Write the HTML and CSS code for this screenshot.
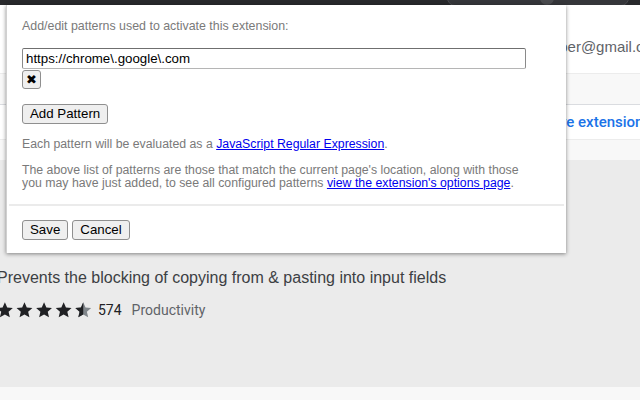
FILE: index.html
```html
<!DOCTYPE html>
<html>
<head>
<meta charset="utf-8">
<link rel="stylesheet" href="styles.css">
</head>
<body>
<div class="topbar"><div class="omni"><span class="omni-dot"></span></div></div>
<div class="page">
  <div class="header"><span class="email">developer@gmail.com</span></div>
  <div class="band"></div>
  <div class="linkrow"><span class="bluelink">Remove extension</span></div>
  <div class="band short"></div>
  <div class="main">
    <h1 class="title">Don't F*** With Paste</h1>
    <p class="desc">Prevents the blocking of copying from &amp; pasting into input fields</p>
    <div class="rating">
      <span class="stars">
        <svg width="96" height="18" viewBox="0 0 96 18">
          <defs>
            <path id="st" d="M9 1.2l2.35 5.3 5.75.5-4.35 3.8 1.3 5.65L9 13.5l-5.05 2.95 1.3-5.65L.9 7l5.75-.5z"/>
            <clipPath id="half"><rect x="0" y="0" width="9" height="18"/></clipPath>
          </defs>
          <use href="#st" x="-4" fill="#202124"/>
          <use href="#st" x="16" fill="#202124"/>
          <use href="#st" x="36" fill="#202124"/>
          <use href="#st" x="56" fill="#202124"/>
          <g transform="translate(76 0)">
            <use href="#st" fill="#80868b"/>
            <use href="#st" fill="#202124" clip-path="url(#half)"/>
          </g>
        </svg>
      </span>
      <span class="count">574</span>
      <span class="cat">Productivity</span>
    </div>
  </div>
  <div class="foot"></div>
</div>

<div class="modal">
  <div class="section">
    <p class="intro">Add/edit patterns used to activate this extension:</p>
    <input class="pattern" type="text" value="https://chrome\.google\.com">
    <div><button class="btn xbtn">&#x2716;</button></div>
    <button class="btn add">Add Pattern</button>
    <p class="note">Each pattern will be evaluated as a <a href="#">JavaScript Regular Expression</a>.</p>
    <p class="note second">The above list of patterns are those that match the current page's location, along with those you may have just added, to see all configured patterns <a href="#">view the extension's options page</a>.</p>
  </div>
  <hr class="rule">
  <div class="section actions">
    <button class="btn">Save</button>
    <button class="btn">Cancel</button>
  </div>
</div>
</body>
</html>
```
FILE: styles.css
```css
html, body {
  margin: 0;
  padding: 0;
}
body {
  width: 640px;
  height: 400px;
  overflow: hidden;
  position: relative;
  font-family: "Liberation Sans", Arial, sans-serif;
  background: #f8f8f8;
}
.topbar {
  height: 5px;
  background: #28292c;
  position: relative;
  overflow: hidden;
}
.omni {
  position: absolute;
  left: 447px;
  top: -12px;
  width: 180px;
  height: 16px;
  border: 1px solid #4a4b4f;
  border-radius: 8px;
  background: #35363a;
}
.omni-dot {
  position: absolute;
  left: 92px;
  top: 2px;
  width: 14px;
  height: 14px;
  border-radius: 50%;
  background: #4a4b4f;
}
.page {
  display: flex;
  flex-direction: column;
}
.header {
  height: 68px;
  background: #fff;
  box-sizing: border-box;
  padding: 33px 0 0 515px;
  overflow: hidden;
  white-space: nowrap;
}
.email {
  font-size: 15px;
  line-height: 18px;
  color: #5f6368;
}
.band {
  height: 30px;
  background: #f8f8f8;
  border-top: 1px solid #ececec;
  border-bottom: 1px solid #dadce0;
}
.band.short {
  height: 20px;
  border-bottom: none;
}
.linkrow {
  height: 34px;
  background: #fff;
  box-sizing: border-box;
  padding: 8px 0 0 520px;
  overflow: hidden;
  white-space: nowrap;
}
.bluelink {
  color: #1a73e8;
  font-size: 15px;
  line-height: 18px;
  font-family: Roboto, "Liberation Sans", sans-serif;
  font-weight: 500;
}
.main {
  height: 227px;
  background: #ebebeb;
  overflow: hidden;
}
.title {
  margin: 60px 0 0 -250px;
  font-size: 24px;
  font-weight: normal;
  color: #202124;
  height: 26px;
  line-height: 26px;
  white-space: nowrap;
}
.desc {
  margin: 22px 0 0 -3px;
  font-size: 16px;
  line-height: 20px;
  color: #3c4043;
  white-space: nowrap;
}
.rating {
  margin-top: 13px;
  display: flex;
  align-items: center;
  height: 18px;
  font-family: Roboto, "Liberation Sans", sans-serif;
  font-size: 14px;
}
.stars {
  display: flex;
  width: 94px;
}
.count {
  margin-left: 4px;
  color: #202124;
}
.cat {
  margin-left: 10px;
  color: #5f6368;
}
.foot {
  height: 13px;
  background: #f8f8f8;
}

.modal {
  position: absolute;
  left: 6px;
  top: 5px;
  width: 560px;
  height: 248px;
  background: #fff;
  box-shadow: 0 1px 4px rgba(0, 0, 0, 0.45);
  border-left: 1px solid #d0d0d0;
  box-sizing: border-box;
  padding: 0 2px;
}
.section {
  padding: 0 13px;
}
.intro {
  margin: 14px 0 0;
  font-size: 12.4px;
  line-height: 14px;
  color: #7a7a7a;
}
.pattern {
  display: block;
  margin-top: 15px;
  width: 504px;
  height: 21px;
  box-sizing: border-box;
  border: 1px solid #8a8a8a;
  border-top-color: #6f6f6f;
  border-bottom-color: #b5b5b5;
  border-radius: 2px;
  padding: 0 3px;
  font-family: "Liberation Sans", Arial, sans-serif;
  font-size: 13.3px;
  color: #000;
  outline: none;
}
.btn {
  font-family: "Liberation Sans", Arial, sans-serif;
  font-size: 13.3px;
  color: #000;
  background: #efefef;
  border: 1px solid #8f8f8f;
  border-radius: 3px;
  height: 20px;
  padding: 0 7px;
  line-height: 18px;
  box-sizing: border-box;
  white-space: nowrap;
}
.xbtn {
  margin-top: 1px;
  width: 19px;
  height: 19px;
  padding: 0;
  font-size: 13px;
  line-height: 17px;
  font-family: "DejaVu Sans", sans-serif;
}
.add {
  margin-top: 15px;
}
.note {
  margin: 14px 0 0;
  font-size: 12.3px;
  line-height: 13px;
  color: #7a7a7a;
}
.note.second {
  margin-top: 13px;
  padding-right: 18px;
}
.note a {
  color: #0000ee;
  text-decoration: underline;
}
.rule {
  margin: 14px 0 0;
  border: none;
  height: 2px;
  background: #ebebeb;
}
.actions {
  margin-top: 14px;
  display: flex;
  gap: 4px;
}
```
